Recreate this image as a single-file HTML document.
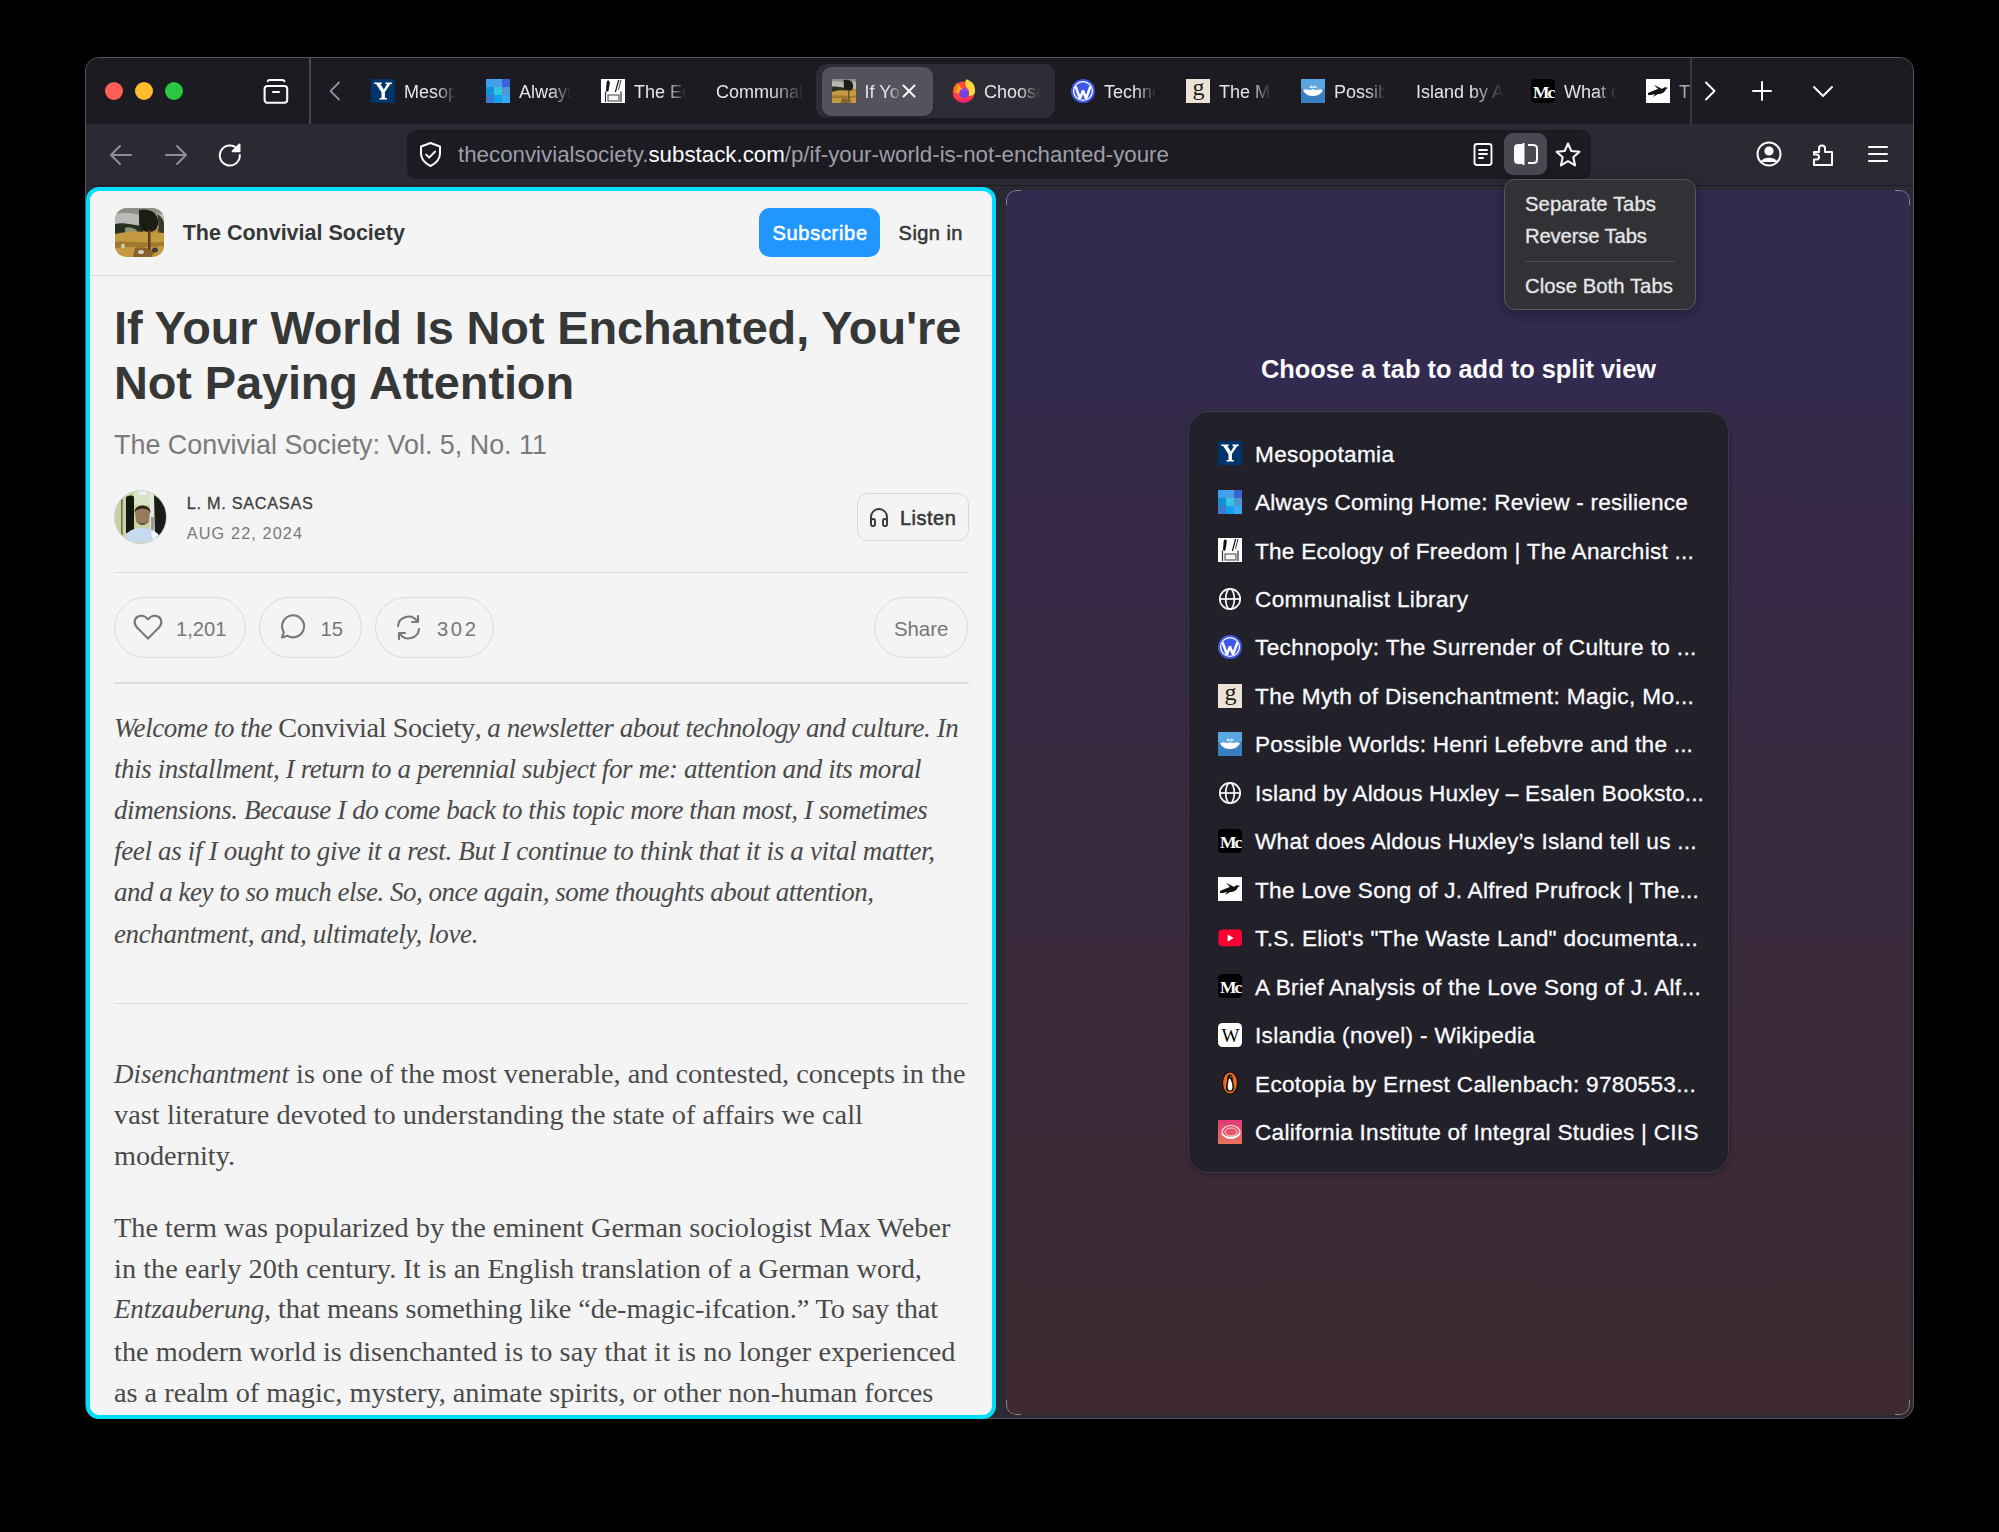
<!DOCTYPE html>
<html><head><meta charset="utf-8"><style>
*{margin:0;padding:0;box-sizing:border-box}
html,body{width:1999px;height:1532px;overflow:hidden;background:#000}
body{position:relative;font-family:"Liberation Sans",sans-serif}
.a{position:absolute}
.t{position:absolute;line-height:1;white-space:nowrap;font-family:"Liberation Sans",sans-serif}
.s{position:absolute;line-height:1;white-space:nowrap;font-family:"Liberation Serif",serif;color:#4a4a4a}
.fade{-webkit-mask-image:linear-gradient(to right,#000 62%,transparent 100%);mask-image:linear-gradient(to right,#000 62%,transparent 100%);overflow:hidden}
.tt{color:#e4e4e8;font-size:18px}
svg{display:block}
</style></head><body>
<div class="a" style="left:85px;top:57px;width:1829px;height:1362px;border-radius:14px;background:#2b2a33;border:1px solid #56555c;overflow:hidden"><div class="a" style="left:0;top:0;width:1829px;height:66px;background:#1c1b22"></div><div class="a" style="left:0;top:127px;width:1829px;height:1px;background:#1c1b22"></div></div>
<div class="a" style="left:104.6px;top:82px;width:18px;height:18px;border-radius:50%;background:#ff5f57"></div>
<div class="a" style="left:135px;top:82px;width:18px;height:18px;border-radius:50%;background:#febc2e"></div>
<div class="a" style="left:165px;top:82px;width:18px;height:18px;border-radius:50%;background:#28c840"></div>
<svg class="a" style="left:262px;top:77px" width="28" height="28" viewBox="0 0 28 28" fill="none" stroke="#fbfbfe" stroke-width="2.1" stroke-linecap="round"><rect x="2.6" y="9" width="22.6" height="16.8" rx="3"/><path d="M5.8 4.2 Q6 3 8 3 H20 Q22 3 22.4 4.2"/><path d="M11 15 H17"/></svg>
<div class="a" style="left:309px;top:58px;width:1.5px;height:66px;background:#48474e"></div>
<div class="a" style="left:1690px;top:58px;width:1.5px;height:66px;background:#3a3940"></div>
<svg class="a" style="left:326px;top:80px" width="18" height="22" viewBox="0 0 18 22" fill="none" stroke="#8f8f9d" stroke-width="1.8" stroke-linecap="round" stroke-linejoin="round"><path d="M13 2.5 L4.5 11 L13 19.5"/></svg>
<div class="a" style="left:816px;top:63.5px;width:239px;height:54px;border-radius:11px;background:#2e2d35"></div>
<div class="a" style="left:821.7px;top:66.5px;width:111px;height:49px;border-radius:9px;background:#54535d;box-shadow:0 1px 2px rgba(0,0,0,.35)"></div>
<div class="a" style="left:832px;top:79px;width:24px;height:24px"><svg width="24" height="24" viewBox="0 0 49 49"><rect width="49" height="49" fill="#b3893a"/><rect width="49" height="20" fill="#b9b9b7"/><path d="M0 0 H49 V6 C40 4 30 8 20 6 C12 4 6 6 0 5Z" fill="#8e8e88"/><path d="M0 16 C8 14 16 17 28 18 L28 28 C18 28 8 30 0 28Z" fill="#2a3020"/><path d="M24 2 C32 0 42 3 43 12 C44 20 40 24 34 24 C28 24 24 20 24 14Z" fill="#1c1d12"/><path d="M0 26 C10 24 18 22 28 24 C34 25 42 24 49 25 L49 49 L0 49Z" fill="#c39a42"/><path d="M0 34 C12 32 24 36 49 34 L49 38 C30 40 12 38 0 40Z" fill="#9a6e2a" opacity=".8"/><rect x="33" y="22" width="2.5" height="20" fill="#5a3e1c"/><path d="M20 40 C26 38 34 40 40 44 L36 49 L18 49Z" fill="#7a5424" opacity=".8"/></svg></div>
<div class="t fade tt" style="left:864.6px;top:calc(97.9px - .8465em);width:37px;height:22px">If Your World</div>
<svg class="a" style="left:900px;top:82px" width="18" height="18" viewBox="0 0 18 18" stroke="#fbfbfe" stroke-width="2" stroke-linecap="round"><path d="M3.5 3.5 L14.5 14.5 M14.5 3.5 L3.5 14.5"/></svg>
<div class="a" style="left:952px;top:79px;width:24px;height:24px"><svg width="24" height="24" viewBox="0 0 24 24"><defs><linearGradient id="ffr" x1="0" y1="0" x2="0" y2="1"><stop offset="0" stop-color="#ff4a3a"/><stop offset=".75" stop-color="#ff3a4a"/><stop offset="1" stop-color="#e0147a"/></linearGradient></defs><circle cx="11.6" cy="13.2" r="10.8" fill="url(#ffr)"/><path d="M14.5 0.2 C12.5 3 13 7 15.5 9.5 C17 11 17.3 14 16 16.5 C19 17 21.5 17 22.8 14 C23.8 9 22 4 18 2 C16.8 1.3 15.6 0.8 14.5 0.2Z" fill="#ffd93a"/><path d="M1.8 10.5 C2.5 7 4 5 5.5 4 L6.5 6.5 L8 5.8 L8.6 8.5 C10.8 9.2 13 10.5 14 12.5 L11 15 C8 15 4.5 14 1.8 13Z" fill="#ffb024"/><path d="M1.8 10.5 C2.5 7 4 5 5.5 4 L6 7.5 C5 9 4.5 11 4.8 13.5 L1.8 13Z" fill="#ff7010"/><circle cx="12.2" cy="14.2" r="4.9" fill="#7043dd"/><path d="M7.6 12.5 C8.5 10 11 9 13.5 9.5 C15.5 10 17 11.8 17 13.5 C15 12 13 11.5 11.5 12.2Z" fill="#a23ef0"/></svg></div>
<div class="t fade tt" style="left:984px;top:calc(97.9px - .8465em);width:56px;height:22px">Choose a tab</div>
<div class="a" style="left:371px;top:79px;width:24px;height:24px"><svg width="24" height="24" viewBox="0 0 24 24"><rect width="24" height="24" fill="#00356b"/><path d="M3.2 3.6 H10.8 V4.9 H9.3 L12.9 10.6 L16 4.9 H14.4 V3.6 H20.8 V4.9 H19.4 L13.9 12.9 V19 H15.9 V20.4 H8.5 V19 H10.5 V13.2 L5.1 4.9 H3.2Z" fill="#fff"/></svg></div>
<div class="t fade tt" style="left:404px;top:calc(97.9px - .8465em);width:52px;height:22px;overflow:hidden">Mesopotamia</div>
<div class="a" style="left:486px;top:79px;width:24px;height:24px"><svg width="24" height="24" viewBox="0 0 24 24"><rect x="0" y="0" width="8" height="8" fill="#3fa0f0"/><rect x="8" y="0" width="8" height="8" fill="#4d9ee8"/><rect x="16" y="0" width="8" height="8" fill="#3b63d8"/><rect x="0" y="8" width="8" height="8" fill="#1590d8"/><rect x="8" y="8" width="8" height="8" fill="#34c6e0"/><rect x="16" y="8" width="8" height="8" fill="#4d98d0"/><rect x="0" y="16" width="8" height="8" fill="#3b7ad0"/><rect x="8" y="16" width="8" height="8" fill="#12a0ee"/><rect x="16" y="16" width="8" height="8" fill="#38a8f0"/></svg></div>
<div class="t fade tt" style="left:519px;top:calc(97.9px - .8465em);width:52px;height:22px;overflow:hidden">Always Coming Home</div>
<div class="a" style="left:601px;top:79px;width:24px;height:24px"><svg width="24" height="24" viewBox="0 0 24 24"><rect width="24" height="24" fill="#fdfdfd"/><path d="M7 1.5 C9 1.5 9 4 8.5 6 L7.5 12 C7 13 5 13 5 11.5 L5.5 5 C5.7 3 6 1.5 7 1.5Z" fill="#111"/><path d="M17 1 L18.3 1 L15 13 L13.8 13Z" fill="#111"/><path d="M19.5 1 L20.5 1 L17.8 11 L17 11Z" fill="#333"/><path d="M4.5 12.5 V23 M20 12.5 V23" stroke="#333" stroke-width="1.2"/><rect x="7" y="16" width="11" height="6" fill="#f4f4f4" stroke="#444" stroke-width="1"/></svg></div>
<div class="t fade tt" style="left:634px;top:calc(97.9px - .8465em);width:52px;height:22px;overflow:hidden">The Ecology of Freedom</div>
<div class="t fade tt" style="left:716px;top:calc(97.9px - .8465em);width:88px;height:22px">Communalist Library</div>
<div class="a" style="left:1071px;top:79px;width:24px;height:24px"><svg width="24" height="24" viewBox="0 0 24 24"><circle cx="12" cy="12" r="12" fill="#3e58e8"/><circle cx="12" cy="12" r="9.4" fill="none" stroke="#fff" stroke-width="1.3"/><path d="M4.6 7.5 L9 19.5 L12 11.5 L15 19.5 L19.4 7.5" fill="none" stroke="#fff" stroke-width="2.4" stroke-linejoin="bevel"/></svg></div>
<div class="t fade tt" style="left:1104px;top:calc(97.9px - .8465em);width:52px;height:22px;overflow:hidden">Technopoly</div>
<div class="a" style="left:1186px;top:79px;width:24px;height:24px"><svg width="24" height="24" viewBox="0 0 24 24"><rect width="24" height="24" fill="#ece3d6"/><text x="12.5" y="16" text-anchor="middle" font-family="Liberation Serif" font-size="24" fill="#1a1a1a">g</text></svg></div>
<div class="t fade tt" style="left:1219px;top:calc(97.9px - .8465em);width:52px;height:22px;overflow:hidden">The Myth of Disenchantment</div>
<div class="a" style="left:1301px;top:79px;width:24px;height:24px"><svg width="24" height="24" viewBox="0 0 24 24"><rect width="24" height="24" fill="#3a7fc1"/><rect width="24" height="10" fill="#5aa6e0"/><path d="M2 11 C6 9 8 12 12 10 C16 12 18 9 22 11 C20 16 15 17 12 17 C9 17 4 16 2 11Z" fill="#fff"/><path d="M8 9 L10 6 L12 8 L14 6 L16 9Z" fill="#cfe6f5"/></svg></div>
<div class="t fade tt" style="left:1334px;top:calc(97.9px - .8465em);width:52px;height:22px;overflow:hidden">Possible Worlds</div>
<div class="t fade tt" style="left:1416px;top:calc(97.9px - .8465em);width:88px;height:22px">Island by Aldous Huxley</div>
<div class="a" style="left:1531px;top:79px;width:24px;height:24px"><svg width="24" height="24" viewBox="0 0 24 24"><rect width="24" height="24" rx="4.5" fill="#000"/><text x="2" y="18.5" font-family="Liberation Serif" font-weight="bold" font-size="17.5" fill="#fff" letter-spacing="-2">Mc</text></svg></div>
<div class="t fade tt" style="left:1564px;top:calc(97.9px - .8465em);width:52px;height:22px;overflow:hidden">What does Aldous</div>
<div class="a" style="left:1646px;top:79px;width:24px;height:24px"><svg width="24" height="24" viewBox="0 0 24 24"><rect width="24" height="24" fill="#fff"/><path d="M2 14 C6 12 9 11 12 10 L8 6 C11 7 14 9 16 10 C18 8 20 8 22 9 L20 10 C19 13 16 15 12 15 L7 18 L9 15 C6 16 4 16 2 16 Z" fill="#111"/></svg></div>
<div class="t tt" style="left:1679px;top:calc(97.9px - .8465em);width:11px;height:22px;overflow:hidden;color:#a8a8ad">The Love Song</div>
<svg class="a" style="left:1701px;top:80px" width="18" height="22" viewBox="0 0 18 22" fill="none" stroke="#fbfbfe" stroke-width="1.9" stroke-linecap="round" stroke-linejoin="round"><path d="M5 2.5 L13.5 11 L5 19.5"/></svg>
<svg class="a" style="left:1750px;top:79px" width="24" height="24" viewBox="0 0 24 24" stroke="#fbfbfe" stroke-width="2" stroke-linecap="round"><path d="M12 3 V21 M3 12 H21"/></svg>
<svg class="a" style="left:1811px;top:79px" width="24" height="24" viewBox="0 0 24 24" fill="none" stroke="#fbfbfe" stroke-width="2" stroke-linecap="round" stroke-linejoin="round"><path d="M3 8 L12 17 L21 8"/></svg>
<svg class="a" style="left:108px;top:142px" width="26" height="26" viewBox="0 0 26 26" fill="none" stroke="#8f8f9d" stroke-width="2" stroke-linecap="round" stroke-linejoin="round"><path d="M23 13 H3 M12 4 L3 13 L12 22"/></svg>
<svg class="a" style="left:163px;top:142px" width="26" height="26" viewBox="0 0 26 26" fill="none" stroke="#8f8f9d" stroke-width="2" stroke-linecap="round" stroke-linejoin="round"><path d="M3 13 H23 M14 4 L23 13 L14 22"/></svg>
<svg class="a" style="left:217px;top:141px" width="26" height="26" viewBox="0 0 26 26" fill="none" stroke="#fbfbfe" stroke-width="2" stroke-linecap="round"><path d="M21.5 9.5 A10 10 0 1 0 22.8 14"/><path d="M22.5 3.5 V10.3 H15.7 Z" fill="#fbfbfe" stroke-linejoin="round"/></svg>
<div class="a" style="left:407px;top:130px;width:1184px;height:49px;border-radius:9px;background:#1c1b22"></div>
<svg class="a" style="left:417px;top:141px" width="27" height="27" viewBox="0 0 27 27" fill="none" stroke="#fbfbfe" stroke-width="2" stroke-linejoin="round" stroke-linecap="round"><path d="M13.5 2 L23 5.5 V12.5 C23 18.5 18.5 22.5 13.5 25 C8.5 22.5 4 18.5 4 12.5 V5.5 Z"/><path d="M9.2 13.6 L12.2 16.6 L18 10.6"/></svg>
<div class="t" style="left:458px;top:calc(162.4px - .8465em);font-size:22.3px;color:#9e9ea6">theconvivialsociety.<span style="color:#fbfbfe">substack.com</span>/p/if-your-world-is-not-enchanted-youre</div>
<svg class="a" style="left:1471px;top:142px" width="24" height="24" viewBox="0 0 24 24" fill="none" stroke="#fbfbfe" stroke-width="1.9" stroke-linecap="round"><rect x="3.5" y="2" width="17" height="21" rx="2.5"/><path d="M8 8 H16 M8 12 H16 M8 16 H12"/></svg>
<div class="a" style="left:1504px;top:133px;width:43px;height:42px;border-radius:9px;background:#4a4951"></div>
<svg class="a" style="left:1512px;top:142px" width="27" height="24" viewBox="0 0 27 24"><path d="M11 2 H6 Q2 2 2 6 V18 Q2 22 6 22 H11 Z" fill="#fbfbfe"/><path d="M11.5 1 V23" stroke="#fbfbfe" stroke-width="2"/><path d="M16 3 H21 Q25 3 25 6.5 V17.5 Q25 21 21 21 H16" fill="none" stroke="#fbfbfe" stroke-width="2"/></svg>
<svg class="a" style="left:1554px;top:141px" width="28" height="28" viewBox="0 0 28 28" fill="none" stroke="#fbfbfe" stroke-width="2" stroke-linejoin="round"><path d="M14 2.5 L17.3 10 L25.5 10.8 L19.3 16.3 L21.1 24.4 L14 20.2 L6.9 24.4 L8.7 16.3 L2.5 10.8 L10.7 10 Z"/></svg>
<svg class="a" style="left:1756px;top:141px" width="26" height="26" viewBox="0 0 26 26" fill="none" stroke="#fbfbfe" stroke-width="2"><circle cx="13" cy="13" r="11.5"/><circle cx="13" cy="10" r="3.6" fill="#fbfbfe"/><path d="M5.5 21 C8 16.5 18 16.5 20.5 21" fill="#fbfbfe"/></svg>
<svg class="a" style="left:1810px;top:141px" width="28" height="28" viewBox="0 0 28 28" fill="none" stroke="#fbfbfe" stroke-width="2" stroke-linejoin="round"><path d="M4 11 H9 V7.5 A3 3 0 0 1 15 7.5 V11 H22 V24 H4 V18.5 H6.5 A2.5 2.5 0 0 0 6.5 13.5 H4 Z"/></svg>
<svg class="a" style="left:1866px;top:143px" width="24" height="22" viewBox="0 0 24 22" stroke="#fbfbfe" stroke-width="2" stroke-linecap="round"><path d="M3 4 H21 M3 11 H21 M3 18 H21"/></svg>
<div class="a" style="left:85.5px;top:186.5px;width:910.5px;height:1232px;border:4.3px solid #00ddff;border-radius:13px;background:#f4f4f4;overflow:hidden">
</div>
<div class="a" style="left:115px;top:207.8px;width:48.8px;height:49px;border-radius:12px;overflow:hidden"><svg width="49" height="49" viewBox="0 0 49 49"><rect width="49" height="49" fill="#b3893a"/><rect width="49" height="20" fill="#b9b9b7"/><path d="M0 0 H49 V6 C40 4 30 8 20 6 C12 4 6 6 0 5Z" fill="#8e8e88"/><path d="M0 16 C8 14 16 17 28 18 L28 28 C18 28 8 30 0 28Z" fill="#2a3020"/><path d="M10 20 C14 18 18 20 22 22 L20 26 C16 26 12 25 10 24Z" fill="#8a9470"/><path d="M24 2 C32 0 42 3 43 12 C44 20 40 24 34 24 C28 24 24 20 24 14Z" fill="#1c1d12"/><path d="M42 6 C46 8 49 12 49 16 L49 26 L43 26 C44 18 43 10 42 6Z" fill="#3a3a2a"/><path d="M0 26 C10 24 18 22 28 24 C34 25 42 24 49 25 L49 49 L0 49Z" fill="#c39a42"/><path d="M0 34 C12 32 24 36 49 34 L49 38 C30 40 12 38 0 40Z" fill="#9a6e2a" opacity=".8"/><rect x="33" y="22" width="2.5" height="20" fill="#5a3e1c"/><path d="M20 40 C26 38 34 40 40 44 L36 49 L18 49Z" fill="#7a5424" opacity=".8"/><ellipse cx="26" cy="44" rx="3" ry="2" fill="#cfd2c4"/><ellipse cx="40" cy="42" rx="3" ry="2.5" fill="#3a3e36"/><ellipse cx="8" cy="38" rx="2" ry="2.5" fill="#d0d8c0" opacity=".9"/></svg></div>
<div class="t" style="left:182.7px;top:calc(241px - .8465em);font-size:21.5px;font-weight:bold;color:#363737">The Convivial Society</div>
<div class="a" style="left:759.2px;top:208px;width:121.2px;height:48.8px;border-radius:11px;background:#2196fe"></div>
<div class="t" style="left:772.5px;top:calc(240px - .8465em);font-size:20px;color:#fff;-webkit-text-stroke:0.55px #fff;letter-spacing:0.7px">Subscribe</div>
<div class="t" style="left:898.6px;top:calc(240px - .8465em);font-size:20px;color:#363737;-webkit-text-stroke:0.55px #363737;letter-spacing:0.45px">Sign in</div>
<div class="a" style="left:90px;top:275px;width:902px;height:1.3px;background:#dedede"></div>
<div class="t" style="left:114px;top:calc(344.5px - .8465em);font-size:46.9px;font-weight:bold;color:#363737;letter-spacing:-0.1px">If Your World Is Not Enchanted, You're</div>
<div class="t" style="left:114px;top:calc(399.5px - .8465em);font-size:46.9px;font-weight:bold;color:#363737;letter-spacing:-0.1px">Not Paying Attention</div>
<div class="t" style="left:114px;top:calc(455px - .8465em);font-size:26.9px;color:#7a7a7a">The Convivial Society: Vol. 5, No. 11</div>
<div class="a" style="left:113.6px;top:490.4px;width:53.6px;height:53.6px;border-radius:50%;overflow:hidden;border:1.6px solid #d4d4d4;background:#c9d4ae"><svg width="51" height="51" viewBox="0 0 51 51"><rect width="51" height="51" fill="#c6d2a6"/><rect x="6" y="8" width="1.6" height="40" fill="#7a6a4a"/><path d="M11 6 C14 4 18 4 19 6 L19 42 L11 42Z" fill="#15180f"/><rect x="19" y="0" width="17" height="14" fill="#d8e2c4"/><rect x="24" y="0" width="8" height="4" fill="#e8f0fa"/><rect x="35" y="0" width="5" height="44" fill="#e4e6e2"/><rect x="36" y="26" width="3" height="14" fill="#9a9c98"/><path d="M39 3 C46 6 51 14 51 22 L51 46 L40 46Z" fill="#1a1c16"/><path d="M20 20 C20 13 35 13 35 20 L34 30 C33 35 22 35 21 30Z" fill="#9a7a5c"/><path d="M19.5 22 C19 12 36 12 35.5 22 C34 16 21 16 19.5 22Z" fill="#2a2018"/><path d="M22 28 C24 36 31 36 33 28 C32 34 23 34 22 28Z" fill="#5a4636"/><path d="M8 51 C9 42 16 37 27 37 C38 37 45 42 46 51Z" fill="#c6daf2"/><path d="M36 40 C42 41 46 45 47 51 L38 51Z" fill="#f2f6fc"/></svg></div>
<div class="t" style="left:186.8px;top:calc(508.8px - .8465em);font-size:16.3px;color:#404040;letter-spacing:0.7px;-webkit-text-stroke:0.3px #404040">L. M. SACASAS</div>
<div class="t" style="left:186.8px;top:calc(538.9px - .8465em);font-size:16.3px;color:#7a7a7a;letter-spacing:1.1px">AUG 22, 2024</div>
<div class="a" style="left:856.8px;top:493.2px;width:112.2px;height:47.6px;border-radius:11px;border:1.3px solid #d9d9d9"></div>
<svg class="a" style="left:868px;top:506px" width="22" height="22" viewBox="0 0 22 22" fill="none" stroke="#3a3a3a" stroke-width="1.9" stroke-linejoin="round"><path d="M3 17 V11 A8 8 0 0 1 19 11 V17"/><rect x="3" y="13" width="4" height="7" rx="1.8"/><rect x="15" y="13" width="4" height="7" rx="1.8"/></svg>
<div class="t" style="left:900px;top:calc(524.8px - .8465em);font-size:20px;color:#363737;-webkit-text-stroke:0.55px #363737;letter-spacing:0.5px">Listen</div>
<div class="a" style="left:114px;top:571.7px;width:855px;height:1.3px;background:#dedede"></div>
<div class="a" style="left:113.7px;top:597.4px;width:132px;height:60.3px;border-radius:31px;border:1.3px solid #dadada"></div>
<div class="a" style="left:258.6px;top:597.4px;width:103px;height:60.3px;border-radius:31px;border:1.3px solid #dadada"></div>
<div class="a" style="left:375.2px;top:597.4px;width:119.3px;height:60.3px;border-radius:31px;border:1.3px solid #dadada"></div>
<div class="a" style="left:873.5px;top:597.4px;width:94.7px;height:60.3px;border-radius:31px;border:1.3px solid #dadada"></div>
<svg class="a" style="left:133px;top:613px" width="30" height="28" viewBox="0 0 30 28" fill="none" stroke="#777" stroke-width="2.1" stroke-linejoin="round"><path d="M15 25.5 L4 14.5 C0.5 11 1 5.5 5 3.5 C8.5 1.8 12.5 3 15 6.5 C17.5 3 21.5 1.8 25 3.5 C29 5.5 29.5 11 26 14.5 Z"/></svg>
<div class="t" style="left:176px;top:calc(636.3px - .8465em);font-size:20.2px;color:#777">1,201</div>
<svg class="a" style="left:277px;top:613px" width="30" height="29" viewBox="0 0 30 29" fill="none" stroke="#777" stroke-width="2.1" stroke-linejoin="round"><path d="M5 24.5 L6.8 19.2 A11 11 0 1 1 10.5 22.8 Z"/></svg>
<div class="t" style="left:320.6px;top:calc(636.3px - .8465em);font-size:20.2px;color:#777">15</div>
<svg class="a" style="left:394px;top:613px" width="30" height="29" viewBox="0 0 30 29" fill="none" stroke="#777" stroke-width="2.1" stroke-linecap="round" stroke-linejoin="round"><path d="M4 13 A10.5 10.5 0 0 1 23 8"/><path d="M24 3 V9 H18"/><path d="M25 16 A10.5 10.5 0 0 1 6 21"/><path d="M5 26 V20 H11"/></svg>
<div class="t" style="left:437px;top:calc(636.3px - .8465em);font-size:20.2px;color:#777;letter-spacing:2.6px">302</div>
<div class="t" style="left:893.9px;top:calc(636px - .8465em);font-size:20.4px;color:#777">Share</div>
<div class="a" style="left:114px;top:682.3px;width:855px;height:1.3px;background:#dedede"></div>
<div class="a" style="left:114px;top:1003px;width:855px;height:1.3px;background:#dedede"></div>
<div class="s" style="left:114px;top:calc(737.7px - 23.70px);font-size:28.3px;letter-spacing:-0.425px"><i style="font-size:27.0px">Welcome to the </i><span style="font-size:28.3px">Convivial Society</span><i style="font-size:27.0px">, a newsletter about technology and culture. In</i></div>
<div class="s" style="left:114px;top:calc(778.9000000000001px - 23.70px);font-size:28.3px;letter-spacing:-0.417px"><i style="font-size:27.0px">this installment, I return to a perennial subject for me: attention and its moral</i></div>
<div class="s" style="left:114px;top:calc(820.1px - 23.70px);font-size:28.3px;letter-spacing:-0.423px"><i style="font-size:27.0px">dimensions. Because I do come back to this topic more than most, I sometimes</i></div>
<div class="s" style="left:114px;top:calc(861.1px - 23.70px);font-size:28.3px;letter-spacing:-0.326px"><i style="font-size:27.0px">feel as if I ought to give it a rest. But I continue to think that it is a vital matter,</i></div>
<div class="s" style="left:114px;top:calc(901.6px - 23.70px);font-size:28.3px;letter-spacing:-0.496px"><i style="font-size:27.0px">and a key to so much else. So, once again, some thoughts about attention,</i></div>
<div class="s" style="left:114px;top:calc(943.2px - 23.70px);font-size:28.3px;letter-spacing:-0.375px"><i style="font-size:27.0px">enchantment, and, ultimately, love.</i></div>
<div class="s" style="left:114px;top:calc(1083.5px - 23.70px);font-size:28.3px;letter-spacing:-0.029px"><i style="font-size:27.0px">Disenchantment</i><span style="font-size:28.3px"> is one of the most venerable, and contested, concepts in the</span></div>
<div class="s" style="left:114px;top:calc(1124.2px - 23.70px);font-size:28.3px;letter-spacing:0.044px"><span style="font-size:28.3px">vast literature devoted to understanding the state of affairs we call</span></div>
<div class="s" style="left:114px;top:calc(1165.7px - 23.70px);font-size:28.3px;letter-spacing:-0.062px"><span style="font-size:28.3px">modernity.</span></div>
<div class="s" style="left:114px;top:calc(1237.2px - 23.70px);font-size:28.3px;letter-spacing:0.001px"><span style="font-size:28.3px">The term was popularized by the eminent German sociologist Max Weber</span></div>
<div class="s" style="left:114px;top:calc(1278.2px - 23.70px);font-size:28.3px;letter-spacing:0.016px"><span style="font-size:28.3px">in the early 20th century. It is an English translation of a German word,</span></div>
<div class="s" style="left:114px;top:calc(1319.0px - 23.70px);font-size:28.3px;letter-spacing:-0.120px"><i style="font-size:27.0px">Entzauberung</i><span style="font-size:28.3px">, that means something like “de-magic-ifcation.” To say that</span></div>
<div class="s" style="left:114px;top:calc(1361.2px - 23.70px);font-size:28.3px;letter-spacing:0.041px"><span style="font-size:28.3px">the modern world is disenchanted is to say that it is no longer experienced</span></div>
<div class="s" style="left:114px;top:calc(1402.2px - 23.70px);font-size:28.3px;letter-spacing:-0.012px"><span style="font-size:28.3px">as a realm of magic, mystery, animate spirits, or other non-human forces</span></div>
<div class="a" style="left:1006px;top:190px;width:904px;height:1225px;border-radius:10px;overflow:hidden;background:linear-gradient(to bottom,#332a50 0px,#332a50 212px,#352a4b 213px,#3f2a30 1225px)"></div>
<div class="a" style="left:1006px;top:190px;width:904px;height:1225px;border-radius:10px;border:1.2px solid rgba(200,200,210,.55);-webkit-mask-image:radial-gradient(circle at 10px 10px,#000 10.6px,transparent 11px),radial-gradient(circle at calc(100% - 10px) 10px,#000 10.6px,transparent 11px),radial-gradient(circle at 10px calc(100% - 10px),#000 10.6px,transparent 11px),radial-gradient(circle at calc(100% - 10px) calc(100% - 10px),#000 10.6px,transparent 11px)"></div>
<div class="t" style="left:1261px;top:calc(378.7px - .8465em);font-size:25.4px;font-weight:bold;color:#fbfbfe">Choose a tab to add to split view</div>
<div class="a" style="left:1188px;top:411.4px;width:541px;height:762px;border-radius:21px;background:#22212a;border:1px solid #3b3946;box-shadow:0 2px 6px rgba(0,0,0,.25)"></div>
<div class="a" style="left:1218px;top:441.3px;width:24px;height:24px"><svg width="24" height="24" viewBox="0 0 24 24"><rect width="24" height="24" fill="#00356b"/><path d="M3.2 3.6 H10.8 V4.9 H9.3 L12.9 10.6 L16 4.9 H14.4 V3.6 H20.8 V4.9 H19.4 L13.9 12.9 V19 H15.9 V20.4 H8.5 V19 H10.5 V13.2 L5.1 4.9 H3.2Z" fill="#fff"/></svg></div>
<div class="t" style="left:1255px;top:calc(462.80px - .8465em);font-size:22.6px;color:#fbfbfe;letter-spacing:0.334px;-webkit-text-stroke:0.3px #fbfbfe">Mesopotamia</div>
<div class="a" style="left:1218px;top:489.8px;width:24px;height:24px"><svg width="24" height="24" viewBox="0 0 24 24"><rect x="0" y="0" width="8" height="8" fill="#3fa0f0"/><rect x="8" y="0" width="8" height="8" fill="#4d9ee8"/><rect x="16" y="0" width="8" height="8" fill="#3b63d8"/><rect x="0" y="8" width="8" height="8" fill="#1590d8"/><rect x="8" y="8" width="8" height="8" fill="#34c6e0"/><rect x="16" y="8" width="8" height="8" fill="#4d98d0"/><rect x="0" y="16" width="8" height="8" fill="#3b7ad0"/><rect x="8" y="16" width="8" height="8" fill="#12a0ee"/><rect x="16" y="16" width="8" height="8" fill="#38a8f0"/></svg></div>
<div class="t" style="left:1255px;top:calc(511.25px - .8465em);font-size:22.6px;color:#fbfbfe;letter-spacing:0.223px;-webkit-text-stroke:0.3px #fbfbfe">Always Coming Home: Review - resilience</div>
<div class="a" style="left:1218px;top:538.2px;width:24px;height:24px"><svg width="24" height="24" viewBox="0 0 24 24"><rect width="24" height="24" fill="#fdfdfd"/><path d="M7 1.5 C9 1.5 9 4 8.5 6 L7.5 12 C7 13 5 13 5 11.5 L5.5 5 C5.7 3 6 1.5 7 1.5Z" fill="#111"/><path d="M17 1 L18.3 1 L15 13 L13.8 13Z" fill="#111"/><path d="M19.5 1 L20.5 1 L17.8 11 L17 11Z" fill="#333"/><path d="M4.5 12.5 V23 M20 12.5 V23" stroke="#333" stroke-width="1.2"/><rect x="7" y="16" width="11" height="6" fill="#f4f4f4" stroke="#444" stroke-width="1"/></svg></div>
<div class="t" style="left:1255px;top:calc(559.70px - .8465em);font-size:22.6px;color:#fbfbfe;letter-spacing:0.249px;-webkit-text-stroke:0.3px #fbfbfe">The Ecology of Freedom | The Anarchist ...</div>
<div class="a" style="left:1218px;top:586.7px;width:24px;height:24px"><svg width="24" height="24" viewBox="0 0 24 24" fill="none" stroke="#fbfbfe" stroke-width="1.7"><circle cx="12" cy="12" r="10.2"/><ellipse cx="12" cy="12" rx="4.3" ry="10.2"/><path d="M2 12 H22"/></svg></div>
<div class="t" style="left:1255px;top:calc(608.15px - .8465em);font-size:22.6px;color:#fbfbfe;letter-spacing:0.321px;-webkit-text-stroke:0.3px #fbfbfe">Communalist Library</div>
<div class="a" style="left:1218px;top:635.1px;width:24px;height:24px"><svg width="24" height="24" viewBox="0 0 24 24"><circle cx="12" cy="12" r="12" fill="#3e58e8"/><circle cx="12" cy="12" r="9.4" fill="none" stroke="#fff" stroke-width="1.3"/><path d="M4.6 7.5 L9 19.5 L12 11.5 L15 19.5 L19.4 7.5" fill="none" stroke="#fff" stroke-width="2.4" stroke-linejoin="bevel"/></svg></div>
<div class="t" style="left:1255px;top:calc(656.60px - .8465em);font-size:22.6px;color:#fbfbfe;letter-spacing:0.352px;-webkit-text-stroke:0.3px #fbfbfe">Technopoly: The Surrender of Culture to ...</div>
<div class="a" style="left:1218px;top:683.5px;width:24px;height:24px"><svg width="24" height="24" viewBox="0 0 24 24"><rect width="24" height="24" fill="#ece3d6"/><text x="12.5" y="16" text-anchor="middle" font-family="Liberation Serif" font-size="24" fill="#1a1a1a">g</text></svg></div>
<div class="t" style="left:1255px;top:calc(705.05px - .8465em);font-size:22.6px;color:#fbfbfe;letter-spacing:0.371px;-webkit-text-stroke:0.3px #fbfbfe">The Myth of Disenchantment: Magic, Mo...</div>
<div class="a" style="left:1218px;top:732.0px;width:24px;height:24px"><svg width="24" height="24" viewBox="0 0 24 24"><rect width="24" height="24" fill="#3a7fc1"/><rect width="24" height="10" fill="#5aa6e0"/><path d="M2 11 C6 9 8 12 12 10 C16 12 18 9 22 11 C20 16 15 17 12 17 C9 17 4 16 2 11Z" fill="#fff"/><path d="M8 9 L10 6 L12 8 L14 6 L16 9Z" fill="#cfe6f5"/></svg></div>
<div class="t" style="left:1255px;top:calc(753.50px - .8465em);font-size:22.6px;color:#fbfbfe;letter-spacing:0.210px;-webkit-text-stroke:0.3px #fbfbfe">Possible Worlds: Henri Lefebvre and the ...</div>
<div class="a" style="left:1218px;top:780.5px;width:24px;height:24px"><svg width="24" height="24" viewBox="0 0 24 24" fill="none" stroke="#fbfbfe" stroke-width="1.7"><circle cx="12" cy="12" r="10.2"/><ellipse cx="12" cy="12" rx="4.3" ry="10.2"/><path d="M2 12 H22"/></svg></div>
<div class="t" style="left:1255px;top:calc(801.95px - .8465em);font-size:22.6px;color:#fbfbfe;letter-spacing:0.192px;-webkit-text-stroke:0.3px #fbfbfe">Island by Aldous Huxley – Esalen Booksto...</div>
<div class="a" style="left:1218px;top:828.9px;width:24px;height:24px"><svg width="24" height="24" viewBox="0 0 24 24"><rect width="24" height="24" rx="4.5" fill="#000"/><text x="2" y="18.5" font-family="Liberation Serif" font-weight="bold" font-size="17.5" fill="#fff" letter-spacing="-2">Mc</text></svg></div>
<div class="t" style="left:1255px;top:calc(850.40px - .8465em);font-size:22.6px;color:#fbfbfe;letter-spacing:0.262px;-webkit-text-stroke:0.3px #fbfbfe">What does Aldous Huxley’s Island tell us ...</div>
<div class="a" style="left:1218px;top:877.4px;width:24px;height:24px"><svg width="24" height="24" viewBox="0 0 24 24"><rect width="24" height="24" fill="#fff"/><path d="M2 14 C6 12 9 11 12 10 L8 6 C11 7 14 9 16 10 C18 8 20 8 22 9 L20 10 C19 13 16 15 12 15 L7 18 L9 15 C6 16 4 16 2 16 Z" fill="#111"/></svg></div>
<div class="t" style="left:1255px;top:calc(898.85px - .8465em);font-size:22.6px;color:#fbfbfe;letter-spacing:0.266px;-webkit-text-stroke:0.3px #fbfbfe">The Love Song of J. Alfred Prufrock | The...</div>
<div class="a" style="left:1218px;top:925.8px;width:24px;height:24px"><svg width="24" height="24" viewBox="0 0 24 24"><rect x="0.4" y="3.6" width="23.6" height="16.6" rx="4" fill="#ff0033"/><path d="M9.6 8.4 L15.8 11.9 L9.6 15.4Z" fill="#fff"/></svg></div>
<div class="t" style="left:1255px;top:calc(947.30px - .8465em);font-size:22.6px;color:#fbfbfe;letter-spacing:0.341px;-webkit-text-stroke:0.3px #fbfbfe">T.S. Eliot's &quot;The Waste Land&quot; documenta...</div>
<div class="a" style="left:1218px;top:974.2px;width:24px;height:24px"><svg width="24" height="24" viewBox="0 0 24 24"><rect width="24" height="24" rx="4.5" fill="#000"/><text x="2" y="18.5" font-family="Liberation Serif" font-weight="bold" font-size="17.5" fill="#fff" letter-spacing="-2">Mc</text></svg></div>
<div class="t" style="left:1255px;top:calc(995.75px - .8465em);font-size:22.6px;color:#fbfbfe;letter-spacing:0.308px;-webkit-text-stroke:0.3px #fbfbfe">A Brief Analysis of the Love Song of J. Alf...</div>
<div class="a" style="left:1218px;top:1022.7px;width:24px;height:24px"><svg width="24" height="24" viewBox="0 0 24 24"><rect width="24" height="24" rx="4.5" fill="#fff"/><text x="12" y="18.5" text-anchor="middle" font-family="Liberation Serif" font-size="19" fill="#000" letter-spacing="-1">W</text></svg></div>
<div class="t" style="left:1255px;top:calc(1044.20px - .8465em);font-size:22.6px;color:#fbfbfe;letter-spacing:0.322px;-webkit-text-stroke:0.3px #fbfbfe">Islandia (novel) - Wikipedia</div>
<div class="a" style="left:1218px;top:1071.2px;width:24px;height:24px"><svg width="24" height="24" viewBox="0 0 24 24"><ellipse cx="12" cy="12" rx="8" ry="11.7" fill="#111"/><ellipse cx="12" cy="12" rx="6.9" ry="10.6" fill="#f26b1d"/><path d="M12 3.2 C10 3.2 9.2 5.5 9.2 8 C9.2 11 7.8 14.5 8 17.5 C8.2 19.5 9.5 20.8 12 20.8 C14.5 20.8 15.8 19.5 16 17.5 C16.2 14.5 14.8 11 14.8 8 C14.8 5.5 14 3.2 12 3.2Z" fill="#111"/><path d="M11.5 7 C10.5 8.5 10.2 11.5 9.8 14.5 C9.5 17 10 19.5 12 19.6 C14 19.5 14.6 17.5 14.4 15 C14.2 12 13.2 9 11.5 7Z" fill="#fff"/><path d="M12.2 4.5 L14 6 L12.5 6.4Z" fill="#f2b01d"/></svg></div>
<div class="t" style="left:1255px;top:calc(1092.65px - .8465em);font-size:22.6px;color:#fbfbfe;letter-spacing:0.309px;-webkit-text-stroke:0.3px #fbfbfe">Ecotopia by Ernest Callenbach: 9780553...</div>
<div class="a" style="left:1218px;top:1119.6px;width:24px;height:24px"><svg width="24" height="24" viewBox="0 0 24 24"><defs><linearGradient id="cg" x1="0" y1="0" x2="0" y2="1"><stop offset="0" stop-color="#e23a78"/><stop offset="1" stop-color="#e8735a"/></linearGradient></defs><rect width="24" height="24" fill="url(#cg)"/><ellipse cx="13" cy="12" rx="9" ry="6.5" fill="none" stroke="#fff" stroke-width="1.2" opacity=".85"/><ellipse cx="13" cy="12" rx="6" ry="4" fill="none" stroke="#fff" stroke-width="1" opacity=".7"/><path d="M4 14 C9 19 18 19 22 13" fill="none" stroke="#fff" stroke-width="1.6"/></svg></div>
<div class="t" style="left:1255px;top:calc(1141.10px - .8465em);font-size:22.6px;color:#fbfbfe;letter-spacing:0.258px;-webkit-text-stroke:0.3px #fbfbfe">California Institute of Integral Studies | CIIS</div>
<div class="a" style="left:1504px;top:179px;width:192px;height:131px;border-radius:11px;background:#323236;border:1.2px solid #58585c;box-shadow:0 4px 14px rgba(0,0,0,.35)"></div>
<div class="t" style="left:1525px;top:calc(210.8px - .8465em);font-size:20.3px;color:#e6e6e8;letter-spacing:0.038px;-webkit-text-stroke:0.3px #e6e6e8">Separate Tabs</div>
<div class="t" style="left:1525px;top:calc(243.6px - .8465em);font-size:20.3px;color:#e6e6e8;letter-spacing:-0.158px;-webkit-text-stroke:0.3px #e6e6e8">Reverse Tabs</div>
<div class="t" style="left:1525px;top:calc(293.4px - .8465em);font-size:20.3px;color:#e6e6e8;letter-spacing:0.039px;-webkit-text-stroke:0.3px #e6e6e8">Close Both Tabs</div>
<div class="a" style="left:1525px;top:260.5px;width:150px;height:1.3px;background:#505054"></div>
</body></html>
